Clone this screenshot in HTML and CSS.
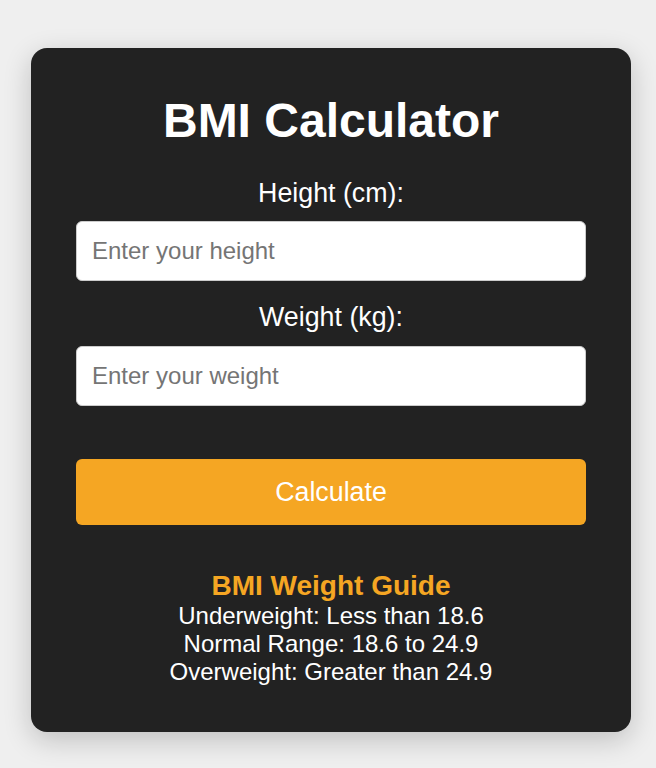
FILE: index.html
```html
<!DOCTYPE html>
<html lang="en">
<head>
<meta charset="utf-8">
<title>BMI Calculator</title>
<link rel="stylesheet" href="styles.css">
</head>
<body>
<main class="page">
  <section class="card">
    <h1 class="title">BMI Calculator</h1>
    <form class="form">
      <label class="label" for="height">Height (cm):</label>
      <input class="field field-height" id="height" type="text" placeholder="Enter your height">
      <label class="label" for="weight">Weight (kg):</label>
      <input class="field" id="weight" type="text" placeholder="Enter your weight">
      <button class="btn" type="button">Calculate</button>
    </form>
    <div class="guide">
      <h3 class="guide-title">BMI Weight Guide</h3>
      <p class="guide-line">Underweight: Less than 18.6</p>
      <p class="guide-line">Normal Range: 18.6 to 24.9</p>
      <p class="guide-line">Overweight: Greater than 24.9</p>
    </div>
  </section>
</main>
</body>
</html>
```

FILE: styles.css
```css
html, body {
  margin: 0;
  padding: 0;
}

body {
  background: #efefef;
  font-family: "Liberation Sans", Arial, sans-serif;
  font-size: 24px;
  color: #ffffff;
}

.page {
  display: flex;
  justify-content: center;
  padding: 48px 0 36px 6px;
}

.card {
  width: 600px;
  box-sizing: border-box;
  padding: 45px 45px 46px;
  background: #222222;
  border-radius: 16px;
  box-shadow: 0 8px 28px rgba(0, 0, 0, 0.2);
  text-align: center;
}

.title {
  margin: 0 0 29.5px;
  font-size: 48px;
  font-weight: bold;
  line-height: normal;
}

.form {
  display: flex;
  flex-direction: column;
}

.label {
  display: block;
  font-size: 26.8px;
  line-height: 30.8px;
  margin-bottom: 13px;
}

.field {
  box-sizing: border-box;
  height: 60px;
  padding: 0 15px;
  border: 1px solid #cccccc;
  border-radius: 6px;
  background: #ffffff;
  font-family: "Liberation Sans", Arial, sans-serif;
  font-size: 24px;
  color: #222222;
  outline: none;
}

.field::placeholder {
  color: #757575;
}

.field-height {
  margin-bottom: 20.5px;
}

.btn {
  margin-top: 53.5px;
  height: 66px;
  border: none;
  border-radius: 6px;
  background: #f5a623;
  color: #ffffff;
  font-family: "Liberation Sans", Arial, sans-serif;
  font-size: 26.8px;
  cursor: pointer;
}

.guide {
  margin-top: 44.5px;
}

.guide-title {
  margin: 0;
  font-size: 28px;
  font-weight: bold;
  line-height: normal;
  color: #f5a623;
}

.guide-line {
  margin: 0;
  font-size: 24px;
  line-height: 28.3px;
}
```
